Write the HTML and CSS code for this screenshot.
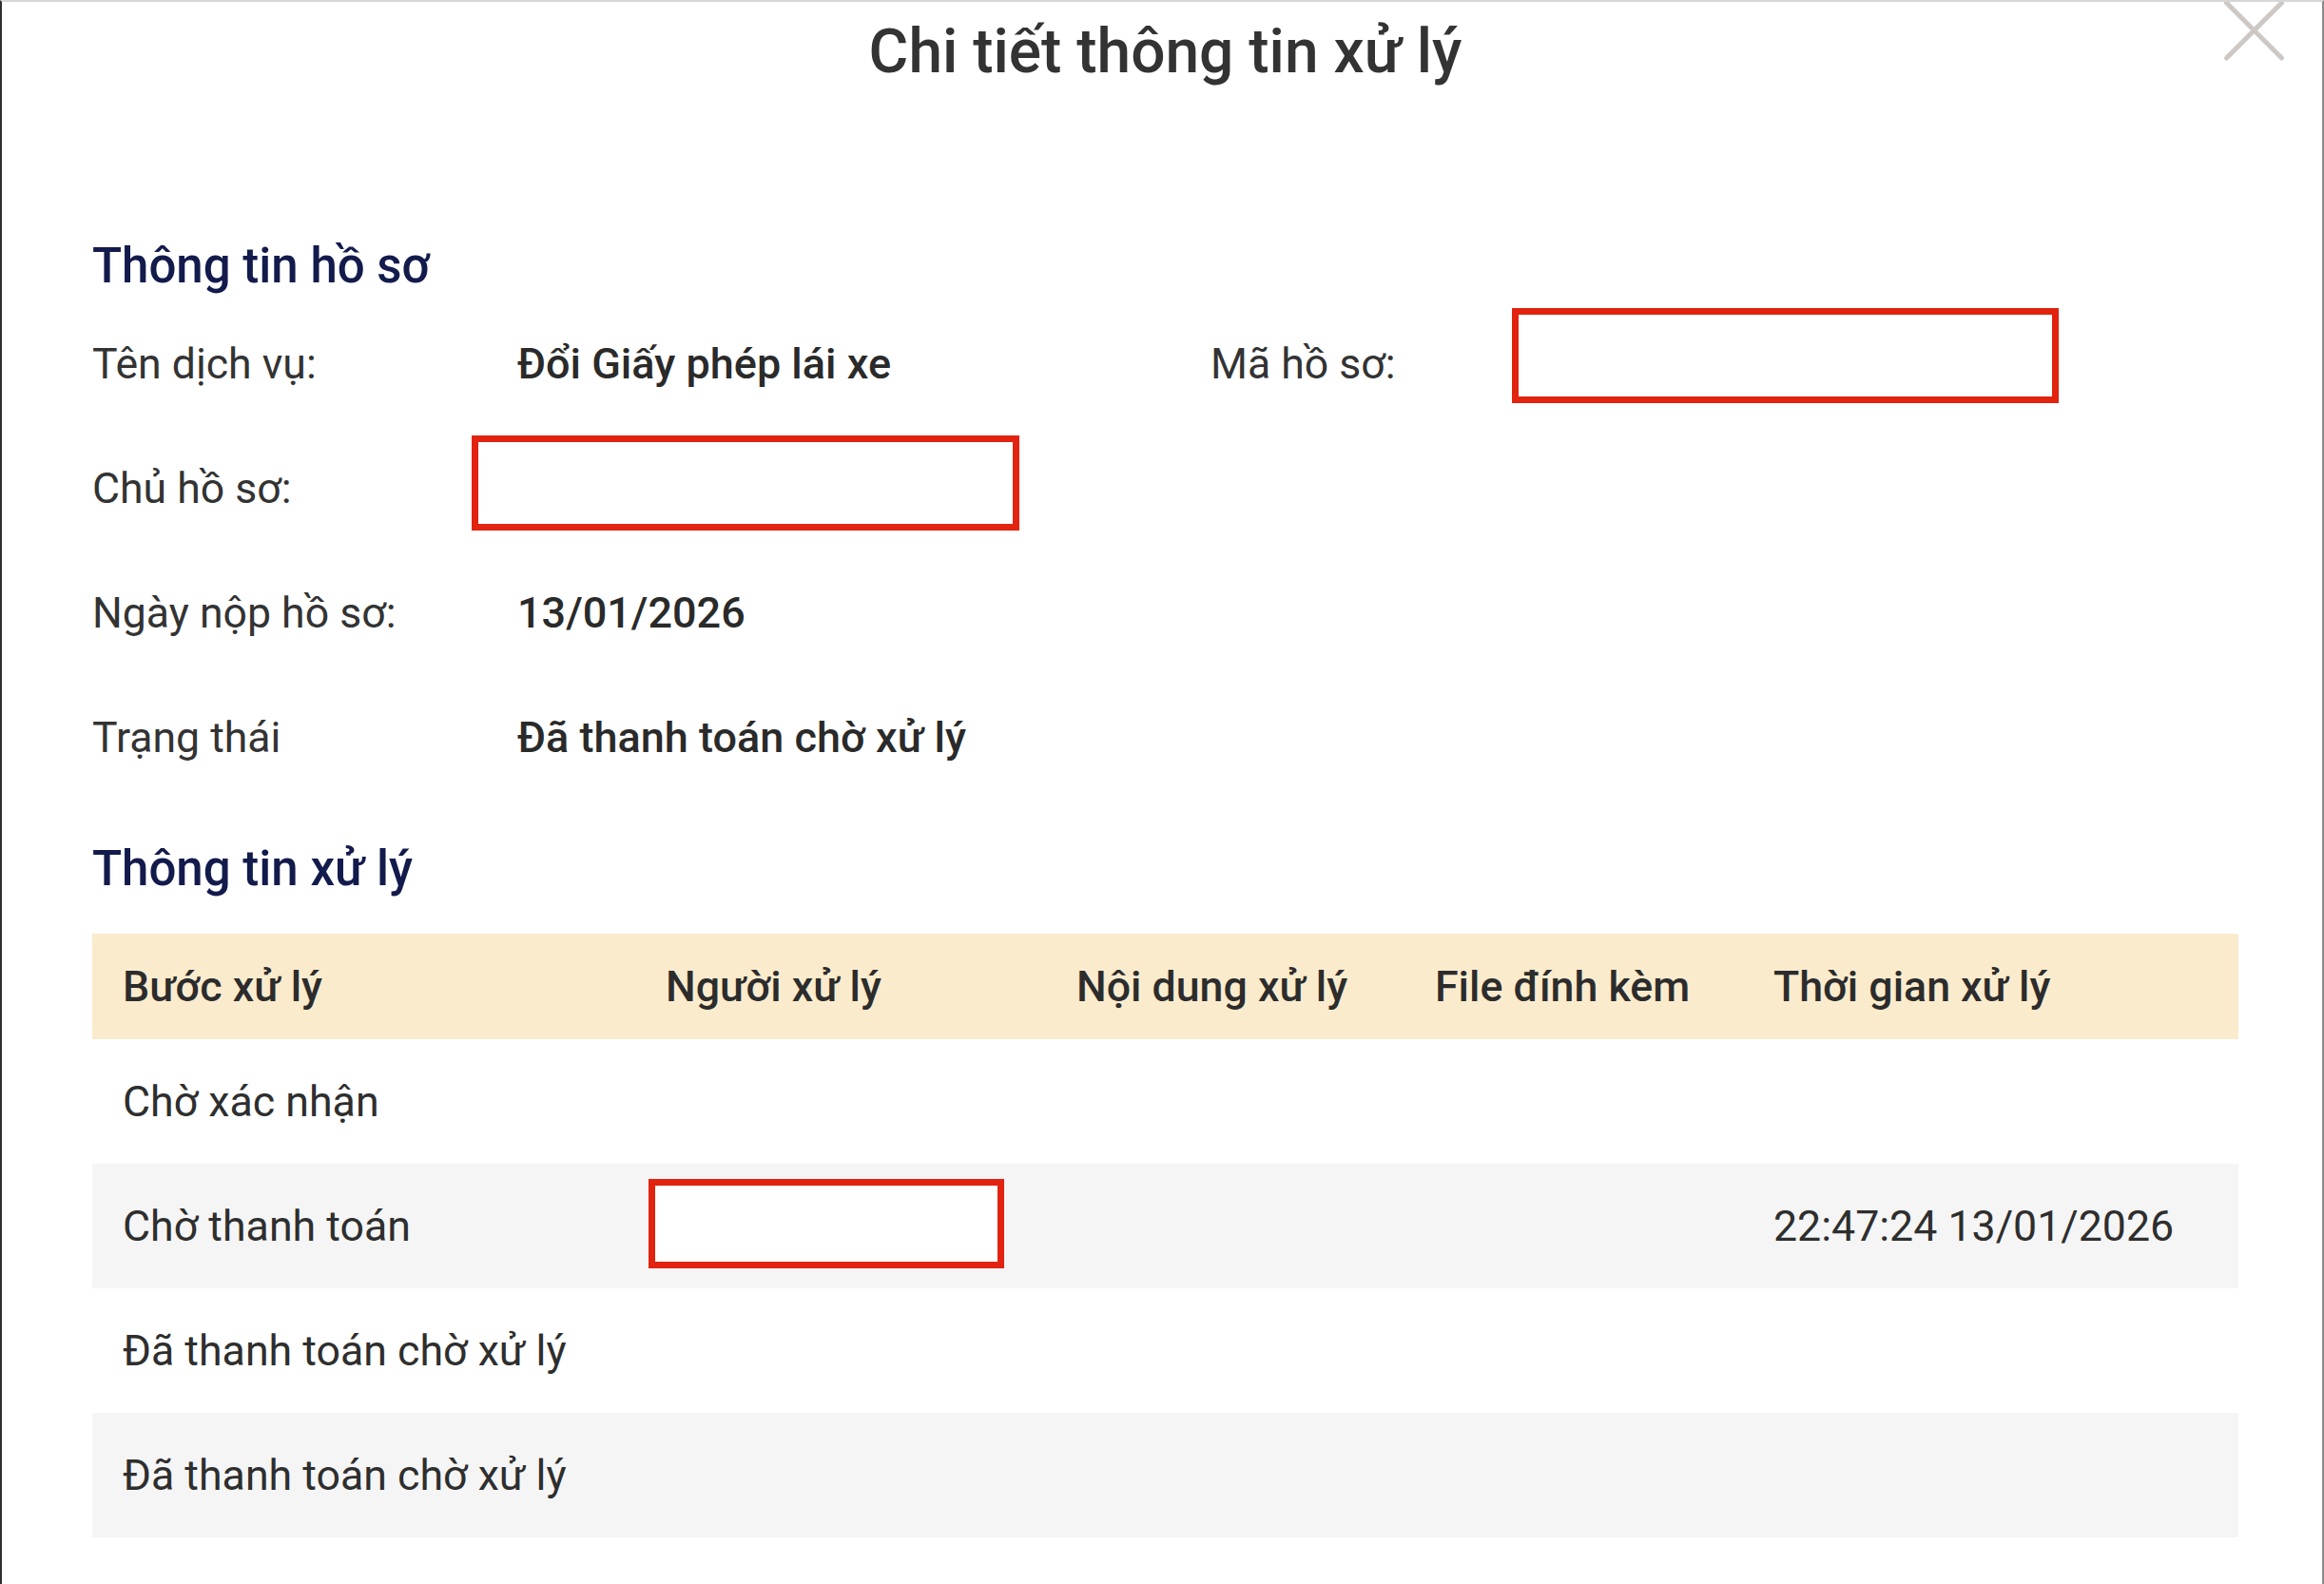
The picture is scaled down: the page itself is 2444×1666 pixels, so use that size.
FILE: index.html
```html
<!DOCTYPE html>
<html lang="vi">
<head>
<meta charset="utf-8">
<title>Chi tiết thông tin xử lý</title>
<link rel="stylesheet" href="styles.css">
</head>
<body>
<div class="modal">
  <button class="close" aria-label="Đóng">
    <svg width="74" height="66" viewBox="0 0 74 66">
      <line x1="7.5" y1="3" x2="65.5" y2="61" />
      <line x1="65.5" y1="3" x2="7.5" y2="61" />
    </svg>
  </button>
  <h1 class="title">Chi tiết thông tin xử lý</h1>

  <h2 class="section section-first">Thông tin hồ sơ</h2>
  <div class="info">
    <div class="label">Tên dịch vụ:</div>
    <div class="value">Đổi Giấy phép lái xe</div>
    <div class="label">Mã hồ sơ:</div>
    <div class="redact redact-code"></div>

    <div class="label">Chủ hồ sơ:</div>
    <div class="redact redact-owner"></div>
    <div></div>
    <div></div>

    <div class="label">Ngày nộp hồ sơ:</div>
    <div class="value">13/01/2026</div>
    <div></div>
    <div></div>

    <div class="label">Trạng thái</div>
    <div class="value">Đã thanh toán chờ xử lý</div>
    <div></div>
    <div></div>
  </div>

  <h2 class="section section-second">Thông tin xử lý</h2>
  <table class="steps">
    <colgroup>
      <col class="c1"><col class="c2"><col class="c3"><col class="c4"><col class="c5">
    </colgroup>
    <thead>
      <tr>
        <th>Bước xử lý</th>
        <th>Người xử lý</th>
        <th>Nội dung xử lý</th>
        <th>File đính kèm</th>
        <th>Thời gian xử lý</th>
      </tr>
    </thead>
    <tbody>
      <tr>
        <td>Chờ xác nhận</td><td></td><td></td><td></td><td></td>
      </tr>
      <tr class="alt">
        <td>Chờ thanh toán</td>
        <td class="cell-redact"><div class="redact redact-person"></div></td>
        <td></td><td></td>
        <td>22:47:24 13/01/2026</td>
      </tr>
      <tr>
        <td>Đã thanh toán chờ xử lý</td><td></td><td></td><td></td><td></td>
      </tr>
      <tr class="alt">
        <td>Đã thanh toán chờ xử lý</td><td></td><td></td><td></td><td></td>
      </tr>
    </tbody>
  </table>
</div>
</body>
</html>
```

FILE: styles.css
```css
* { box-sizing: border-box; }

html, body {
  margin: 0;
  padding: 0;
  background: #ffffff;
}

body {
  font-family: Roboto, "Noto Sans", "Liberation Sans", sans-serif;
  color: #333333;
}

.modal {
  position: relative;
  height: 1666px;
  overflow: hidden;
  border-top: 2px solid #d6d6d6;
  border-left: 2px solid #2e2e2e;
  border-right: 2px solid #8a8a8a;
  padding: 13px 88px 0 95px;
}

.close {
  position: absolute;
  top: -2px;
  right: 34px;
  padding: 0;
  margin: 0;
  border: 0;
  background: transparent;
  line-height: 0;
}

.close line {
  stroke: #cdc8c4;
  stroke-width: 5;
  stroke-linecap: round;
}

.title {
  margin: 0;
  font-size: 64px;
  line-height: 80px;
  font-weight: 500;
  color: #333333;
  text-align: center;
}

.section {
  margin: 0;
  font-size: 51px;
  line-height: 60px;
  font-weight: 500;
  color: #131b4c;
}

.section-first { margin-top: 155px; }
.section-second { margin-top: 43px; }

.info {
  margin-top: 7px;
  display: grid;
  grid-template-columns: 447px 729px 317px 575px;
  grid-auto-rows: 131px;
  align-items: center;
  font-size: 44.6px;
}

.label {
  color: #333333;
  font-weight: 400;
}

.value {
  color: #2a2a2a;
  font-weight: 500;
  font-size: 45px;
}

.redact {
  border: 7px solid #e1230f;
  background: #ffffff;
}

.redact-code {
  width: 575px;
  height: 100px;
  margin-bottom: 18px;
}

.redact-owner {
  width: 576px;
  height: 100px;
  margin-left: -48px;
  margin-bottom: 12px;
}

.steps {
  margin-top: 38px;
  width: 2257px;
  border-collapse: collapse;
  table-layout: fixed;
  font-size: 44.7px;
}

.c1 { width: 568px; }
.c2 { width: 432px; }
.c3 { width: 377px; }
.c4 { width: 356px; }
.c5 { width: 524px; }

.steps th {
  height: 111px;
  padding: 0 0 0 32px;
  text-align: left;
  font-weight: 500;
  color: #2c2c2c;
  background: #fbebcd;
  white-space: nowrap;
}

.steps th + th,
.steps td + td { padding-left: 35px; }

.steps td {
  height: 131px;
  padding: 0 0 0 32px;
  color: #2e2e2e;
  white-space: nowrap;
  vertical-align: middle;
}

.steps tr.alt td { background: #f5f5f5; }

.steps td.cell-redact { padding-left: 17px; }

.redact-person {
  width: 374px;
  height: 94px;
  margin-bottom: 6px;
}
```
